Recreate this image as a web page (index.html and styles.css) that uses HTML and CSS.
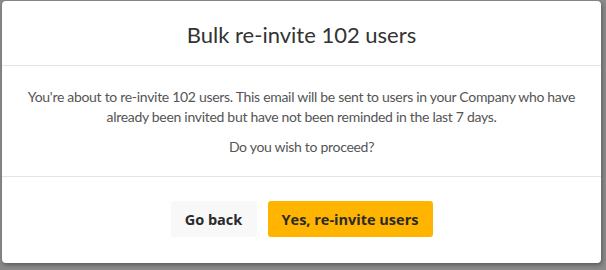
FILE: index.html
```html
<!DOCTYPE html>
<html lang="en">
<head>
    <meta charset="UTF-8">
    <title>Bulk re-invite</title>
    <link rel="stylesheet" href="styles.css">
</head>
<body>
    <div class="modal">
        <div class="modal-header">
            <h2>Bulk re-invite 102 users</h2>
        </div>
        <div class="modal-body">
            <p>You're about to re-invite 102 users. This email will be sent to users in your Company who have already been invited but have not been reminded in the last 7 days.</p>
            <p>Do you wish to proceed?</p>
        </div>
        <div class="modal-footer">
            <button class="btn btn-secondary">Go back</button>
            <button class="btn btn-primary">Yes, re-invite users</button>
        </div>
    </div>
</body>
</html>
```

FILE: styles.css
```css
* {
    margin: 0;
    padding: 0;
    box-sizing: border-box;
}

body {
    font-family: Lato, "Noto Sans", sans-serif;
    background: #8a8a8a;
    width: 606px;
    height: 270px;
    overflow: hidden;
}

.modal {
    margin: 1px 0 0 2px;
    width: 599px;
    height: 262px;
    background: #fff;
    border-radius: 4px;
    box-shadow: 1px 2px 4px rgba(0,0,0,0.35);
    display: flex;
    flex-direction: column;
}

.modal-header {
    height: 65px;
    border-bottom: 1px solid #e3e3e3;
    display: flex;
    align-items: center;
    justify-content: center;
}

.modal-header h2 {
    font-size: 22px;
    font-weight: 400;
    color: #333;
    padding-top: 2px;
}

.modal-body {
    height: 111px;
    border-bottom: 1px solid #e3e3e3;
    padding: 21px 20px 0;
    text-align: center;
    font-size: 14px;
    letter-spacing: -0.3px;
    line-height: 20px;
    color: #555;
}

.modal-body p + p {
    margin-top: 10px;
}

.modal-footer {
    flex: 1;
    display: flex;
    align-items: center;
    justify-content: center;
    gap: 11px;
    padding-bottom: 2px;
}

.btn {
    font-family: "Open Sans", sans-serif;
    font-weight: 700;
    font-size: 14.5px;
    color: #2a2a2a;
    height: 36px;
    border: none;
    border-radius: 3px;
    white-space: nowrap;
}

.btn-secondary {
    background: #f8f8f8;
    width: 86px;
}

.btn-primary {
    background: #ffb400;
    width: 165px;
}
```
